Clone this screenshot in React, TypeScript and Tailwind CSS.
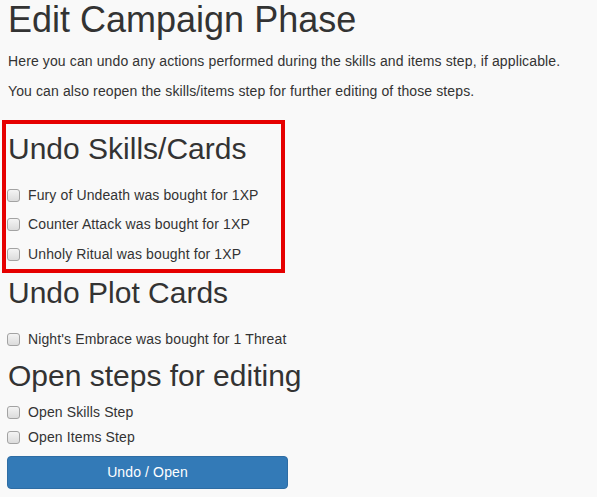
import React from "react";

const skills = [
  "Fury of Undeath was bought for 1XP",
  "Counter Attack was bought for 1XP",
  "Unholy Ritual was bought for 1XP",
];

function Check({ label, className = "" }: { label: string; className?: string }) {
  return (
    <label className={`flex items-center h-[20px] text-[14px] leading-[20px] tracking-[0.12px] ${className}`}>
      <span className="w-[13px] h-[13px] ml-[-1px] mr-[8px] rounded-[3px] border border-[#a3a3a3] bg-gradient-to-b from-[#f4f4f4] to-[#dcdcdc]" />
      <span>{label}</span>
    </label>
  );
}

export default function App() {
  return (
    <div
      className="min-h-screen bg-[#f9f9f9] px-2 text-[#333]"
      style={{ fontFamily: '"Liberation Sans", Arial, sans-serif' }}
    >
      <h1 className="text-[36px] leading-[40px]">Edit Campaign Phase</h1>
      <p className="mt-[11px] text-[14px] leading-[20px] tracking-[0.12px]">
        Here you can undo any actions performed during the skills and items step, if applicable.
      </p>
      <p className="mt-[10px] text-[14px] leading-[20px] tracking-[0.12px]">
        You can also reopen the skills/items step for further editing of those steps.
      </p>

      <div className="mt-[19px] ml-[-6px] w-[283px] border-4 border-[#e60000] pl-[2px] pt-[8px] pb-[5px]">
        <h2 className="text-[30px] leading-[33px]">Undo Skills/Cards</h2>
        <Check className="mt-[20px]" label={skills[0]} />
        <Check className="mt-[9px]" label={skills[1]} />
        <Check className="mt-[10px]" label={skills[2]} />
      </div>

      <h2 className="mt-[3px] text-[30px] leading-[33px]">Undo Plot Cards</h2>
      <Check className="mt-[20px]" label="Night's Embrace was bought for 1 Threat" />

      <h2 className="mt-[10px] text-[30px] leading-[33px]">Open steps for editing</h2>
      <Check className="mt-[10px]" label="Open Skills Step" />
      <Check className="mt-[5px]" label="Open Items Step" />

      <button className="mt-[9px] ml-[-1px] w-[281px] h-[33px] rounded-[4px] bg-[#337ab7] border border-[#2e6da4] text-white text-[14px] tracking-[0.12px]">
        Undo / Open
      </button>
    </div>
  );
}
